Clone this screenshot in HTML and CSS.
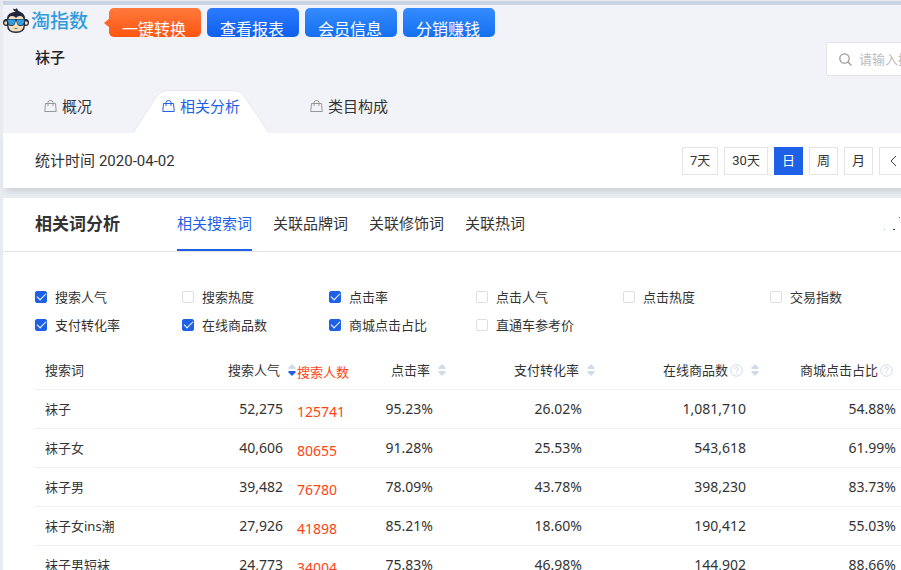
FILE: index.html
```html
<!DOCTYPE html>
<html lang="zh-CN">
<head>
<meta charset="utf-8">
<title>淘指数 - 相关词分析</title>
<link rel="stylesheet" href="styles.css">
</head>
<body>
<svg class="defs" width="0" height="0" aria-hidden="true">
  <symbol id="bag" viewBox="0 0 13 14"><path d="M1.500 4.500h10l.7 8H.8z M4 7V3.500Q4 1.500 6.500 1.500T9 3.500V7" fill="none" stroke="currentColor"/></symbol>
  <symbol id="sort" viewBox="0 0 8 12"><path class="up" d="M4 0L7.500 3.500V5H.5V3.500z"/><path class="down" d="M.5 7h7v1.500L4 12 .5 8.500z"/></symbol>
  <symbol id="help" viewBox="0 0 13 13"><circle cx="6.500" cy="6.500" r="5.700" fill="none" stroke="currentColor"/><path d="M4.700 5.200Q4.700 3.500 6.500 3.500T8.300 5.200Q8.300 6 7.300 6.500T6.500 8M6.500 8.800V10" fill="none" stroke="currentColor"/></symbol>
</svg>
<div class="page">
  <header class="top">
    <div class="brand-row">
      <a class="brand" href="#">
        <svg width="27" height="27" viewBox="0 0 27 27" aria-hidden="true">
          <path d="M7 7Q9 4 13 3.500Q9.500 3 10.500 .5Q13 2 13.500 0Q15 3 17.500 4Q22 6 22 12H4Q4 9 7 7z" fill="#20263c"/>
          <circle cx="3.500" cy="14.500" r="3.500" fill="#20263c"/><circle cx="22.500" cy="14.500" r="3.500" fill="#20263c"/>
          <circle cx="3" cy="15" r="1.800" fill="#f3d8b4"/><circle cx="23" cy="15" r="1.800" fill="#f3d8b4"/>
          <path d="M4 11Q4 4 13 4T22 11V17Q22 25 13 25T4 17z" fill="#20263c"/>
          <path d="M5.500 12Q5.500 8 9 8Q12 8 13 10Q14 8 17 8Q20.500 8 20.500 12V18Q20.500 23.500 13 23.500T5.500 18z" fill="#f3dfc0"/>
          <path d="M2.500 11h21v2H22Q21.500 18 17.500 18Q14 18 13.500 13.500h-1Q12 18 8.500 18Q4.500 18 4 13H2.500z" fill="#20263c"/>
          <path d="M4.500 11.500h7.800Q12.300 17.300 8.600 17.300T4.500 11.500zM13.700 11.500h7.800Q21.200 17.300 17.400 17.300T13.700 11.500z" fill="#2f9edb"/>
          <path d="M11.500 20.500h3" stroke="#8a6a55"/>
        </svg>
        <span>淘指数</span>
      </a>
      <div class="actions">
        <button type="button" class="act hot"><span>一键转换</span></button>
        <button type="button" class="act deep"><span>查看报表</span></button>
        <button type="button" class="act"><span>会员信息</span></button>
        <button type="button" class="act"><span>分销赚钱</span></button>
      </div>
    </div>
    <div class="title-row">
      <h1>袜子</h1>
      <label class="search">
        <svg width="13" height="13" viewBox="0 0 13 13" aria-hidden="true"><circle cx="5.500" cy="5.500" r="4.700" fill="none" stroke="#999" stroke-width="1.200"/><path d="M9 9L12.500 12.500" stroke="#999" stroke-width="1.200"/></svg>
        <input type="search" placeholder="请输入搜索词" aria-label="搜索词">
      </label>
    </div>
    <nav class="tabs">
      <a href="#"><svg><use href="#bag"/></svg>概况</a>
      <a href="#" class="active">
        <svg class="tab-shape" viewBox="0 0 137 43" preserveAspectRatio="none" aria-hidden="true"><path d="M0 43L24 6Q28 .5 34 .5H102Q108 .5 112 6L137 43" fill="#fff" stroke="#e6e8ee"/></svg>
        <svg><use href="#bag"/></svg>相关分析</a>
      <a href="#"><svg><use href="#bag"/></svg>类目构成</a>
    </nav>
  </header>
  <section class="period">
    <p>统计时间 <time>2020-04-02</time></p>
    <div class="range">
      <button type="button">7天</button>
      <button type="button">30天</button>
      <button type="button" class="on">日</button>
      <button type="button">周</button>
      <button type="button">月</button>
      <button type="button" aria-label="上一日"><svg width="7" height="12" viewBox="0 0 7 12"><path d="M6 1L1 6l5 5" fill="none" stroke="#444"/></svg></button>
    </div>
  </section>
  <section class="panel">
    <div class="panel-head">
      <h2>相关词分析</h2>
      <nav class="subtabs">
        <a href="#" class="on">相关搜索词</a>
        <a href="#">关联品牌词</a>
        <a href="#">关联修饰词</a>
        <a href="#">关联热词</a>
      </nav>
      <svg class="specks" width="18" height="15" viewBox="0 0 18 15" aria-hidden="true"><path d="M15 1h1v1h-1z" fill="#3684bd"/><path d="M0 13h1v1H0z" fill="#9cc8e8"/><path d="M9 13h2v1H9z" fill="#333"/></svg>
    </div>
    <div class="panel-body">
      <div class="metrics">
        <label><input type="checkbox" checked>搜索人气</label>
        <label><input type="checkbox">搜索热度</label>
        <label><input type="checkbox" checked>点击率</label>
        <label><input type="checkbox">点击人气</label>
        <label><input type="checkbox">点击热度</label>
        <label><input type="checkbox">交易指数</label>
        <label><input type="checkbox" checked>支付转化率</label>
        <label><input type="checkbox" checked>在线商品数</label>
        <label><input type="checkbox" checked>商城点击占比</label>
        <label><input type="checkbox">直通车参考价</label>
      </div>
      <table>
        <colgroup><col class="c-word"><col class="c-heat"><col class="c-count"><col class="c-click"><col class="c-pay"><col class="c-goods"><col class="c-mall"></colgroup>
        <thead>
          <tr>
            <th>搜索词</th>
            <th>搜索人气<svg class="sort desc"><use href="#sort"/></svg></th>
            <th class="count">搜索人数</th>
            <th>点击率<svg class="sort"><use href="#sort"/></svg></th>
            <th>支付转化率<svg class="sort"><use href="#sort"/></svg></th>
            <th>在线商品数<svg class="help"><use href="#help"/></svg><svg class="sort"><use href="#sort"/></svg></th>
            <th>商城点击占比<svg class="help"><use href="#help"/></svg><svg class="sort"><use href="#sort"/></svg></th>
          </tr>
        </thead>
        <tbody>
          <tr><td>袜子</td><td>52,275</td><td class="count">125741</td><td>95.23%</td><td>26.02%</td><td>1,081,710</td><td>54.88%</td></tr>
          <tr><td>袜子女</td><td>40,606</td><td class="count">80655</td><td>91.28%</td><td>25.53%</td><td>543,618</td><td>61.99%</td></tr>
          <tr><td>袜子男</td><td>39,482</td><td class="count">76780</td><td>78.09%</td><td>43.78%</td><td>398,230</td><td>83.73%</td></tr>
          <tr><td>袜子女ins潮</td><td>27,926</td><td class="count">41898</td><td>85.21%</td><td>18.60%</td><td>190,412</td><td>55.03%</td></tr>
          <tr><td>袜子男短袜</td><td>24,773</td><td class="count">34004</td><td>75.83%</td><td>46.98%</td><td>144,902</td><td>88.66%</td></tr>
        </tbody>
      </table>
    </div>
  </section>
</div>
</body>
</html>
```
FILE: styles.css
```css
* { box-sizing: border-box; }
html { overflow-x: hidden; scrollbar-width: none; background: #e7ebf0; }
body {
  margin: 0;
  font: 13px/20px "Noto Sans", "Noto Sans CJK SC", sans-serif;
  color: #333;
}
h1, h2, p { margin: 0; }
a { color: inherit; text-decoration: none; }
button { font: inherit; color: inherit; cursor: pointer; }
.defs { position: absolute; }

.page { margin-left: 3px; min-width: 1055px; border-top: 1px solid #e7ebf0; }

.top { border-top: 4px solid #cbd3e6; background: #f2f3f8; }
.brand-row { display: flex; align-items: flex-start; height: 36px; }
.brand { display: flex; align-items: center; width: 106px; height: 32px; color: #2f9bdd; font-size: 19px; font-weight: 500; line-height: 32px; }
.brand span { margin-left: 1px; }
.actions { display: flex; gap: 6px; padding-top: 3px; }
.act {
  position: relative;
  width: 92px;
  height: 29px;
  padding: 0;
  border: 0;
  border-radius: 5px;
  background: linear-gradient(#358bff, #1570ee);
  color: #fff;
  font-size: 16px;
}
.act span { display: block; height: 29px; padding-right: 2px; overflow: hidden; line-height: 42px; }
.act.deep { background: linear-gradient(#2c7bff, #0f5fee); }
.act.hot { background: linear-gradient(#ff7a3c, #ff5510); }
.act.hot::before {
  content: "";
  position: absolute;
  left: -5px;
  top: 10px;
  border: solid transparent;
  border-width: 5px 6px 5px 0;
  border-right-color: #ff6624;
}

.title-row { display: flex; justify-content: space-between; height: 49px; padding: 1px 32px 0; }
h1 { font-size: 15px; font-weight: 500; line-height: 30px; color: #222; }
.search { display: flex; align-items: center; gap: 7px; width: 200px; height: 34px; padding: 0 12px; border: 1px solid #e4e5e9; border-radius: 2px; background: #fff; }
.search svg { flex: none; }
.search input { min-width: 0; width: 100%; padding: 0; border: 0; outline: 0; background: none; font: inherit; }
.search input::placeholder { color: #bbb; }

.tabs { display: flex; gap: 41px; padding-left: 41px; height: 43px; }
.tabs a { display: flex; align-items: center; gap: 5px; font-size: 15px; line-height: 20px; padding-bottom: 12px; white-space: nowrap; }
.tabs a svg { width: 13px; height: 14px; color: #999; }
.tabs .active { position: relative; z-index: 0; padding-left: 29px; padding-right: 29px; color: #1e61e6; }
.tabs .active svg { color: #1e61e6; }
.tabs .active .tab-shape { position: absolute; inset: 0; z-index: -1; width: 100%; height: 100%; }

.period { display: flex; justify-content: space-between; align-items: center; height: 55px; padding: 0 32px; background: #fff; box-shadow: 0 5px 6px -3px rgba(60, 70, 90, .2); }
.period p { font-size: 15px; }
.period time { font-family: Roboto, sans-serif; }
.range { display: flex; gap: 6px; width: 344px; font-family: Roboto, "Noto Sans CJK SC", sans-serif; }
.range button { min-width: 29px; height: 28px; padding: 0 7px; border: 1px solid #e4e4e4; background: #fff; }
.range .on { background: #1e61e6; border-color: #1e61e6; color: #fff; }
.range svg { display: block; margin: 0 auto; }

.panel { margin-top: 10px; background: #fff; }
.panel-head { display: flex; align-items: stretch; height: 54px; padding: 0 32px; border-bottom: 1px solid #e4e4e4; }
.panel h2 { width: 142px; font-size: 17px; font-weight: 700; line-height: 52px; }
.subtabs { display: flex; gap: 21px; font-size: 15px; line-height: 50px; }
.subtabs a { height: 53px; white-space: nowrap; }
.subtabs .on { color: #1e61e6; border-bottom: 2px solid #1e61e6; }
.specks { margin: 18px 124px 0 auto; }

.panel-body { padding: 31px 148px 0 32px; }
.metrics { display: grid; grid-template-columns: repeat(6, 147px); grid-auto-rows: 28px; }
.metrics label { display: flex; align-items: center; gap: 8px; white-space: nowrap; }
.metrics input { appearance: none; flex: none; width: 12px; height: 12px; margin: 0; border: 1px solid #dedede; border-radius: 2px; background: #fff; }
.metrics input:checked { display: grid; place-items: center; border-color: #1e61e6; background: #1e61e6; }
.metrics input:checked::before { content: ""; width: 8px; height: 4px; margin-bottom: 3px; border: solid #fff; border-width: 0 0 1px 1px; rotate: -45deg; }

table { width: 100%; margin-top: 12px; border-collapse: separate; border-spacing: 0; table-layout: fixed; }
.c-word { width: 115px; }
.c-heat { width: 147px; }
.c-count { width: 60px; }
.c-click { width: 90px; }
.c-pay { width: 149px; }
.c-goods { width: 164px; }
.c-mall { width: 150px; }
th, td { height: 39px; padding: 0; border-bottom: 1px solid #f0f0f0; text-align: right; font-weight: 400; white-space: nowrap; }
th { padding-right: 1px; }
td { padding-right: 14px; font-size: 14px; }
th:first-child, td:first-child { padding-left: 10px; text-align: left; font-size: 13px; }
th.count, td.count { padding: 5px 0 0; text-align: left; color: #ff4411; }
th.count { padding-top: 3px; }
th svg { vertical-align: middle; }
.sort { width: 8px; height: 12px; margin: 0 0 3px 8px; fill: #d0dce8; color: #d0dce8; }
.sort.desc { color: #1e61e6; }
.down { fill: currentColor; }
.help { width: 13px; height: 13px; margin: 0 0 2px 2px; color: #cbd9e6; }
```
